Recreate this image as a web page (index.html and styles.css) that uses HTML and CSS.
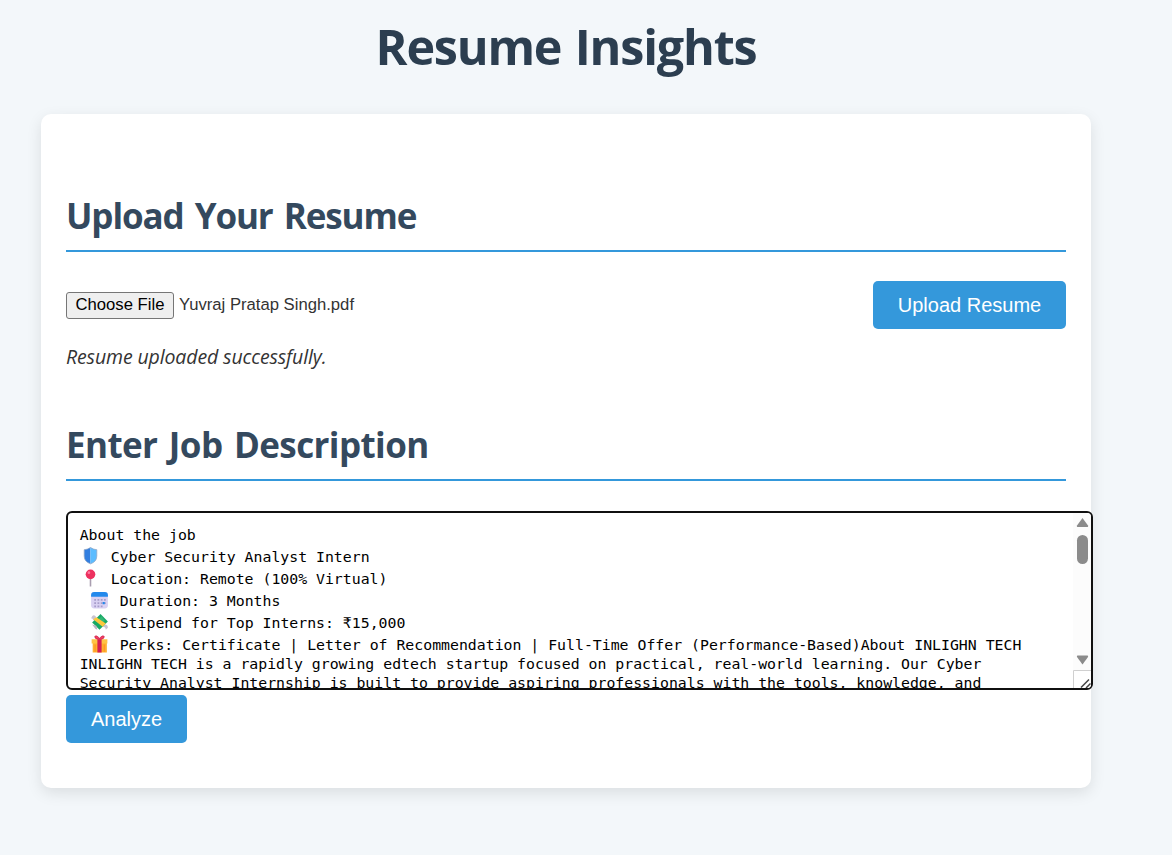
FILE: index.html
```html
<!DOCTYPE html>
<html lang="en">
<head>
<meta charset="utf-8">
<title>Resume Insights</title>
<link rel="stylesheet" href="styles.css">
</head>
<body>
<main class="page">
  <h1 class="title"><span>Resume Insights</span></h1>
  <div class="card">
    <section>
      <h2 class="heading heading-upload"><span>Upload Your Resume</span></h2>
      <div class="upload-row">
        <div class="file"><button class="choose" type="button">Choose File</button><span class="filename">Yuvraj Pratap Singh.pdf</span></div>
        <button class="btn btn-upload" type="button">Upload Resume</button>
      </div>
      <p class="message"><span>Resume uploaded successfully.</span></p>
    </section>
    <section>
      <h2 class="heading heading-job"><span>Enter Job Description</span></h2>
      <div class="editor">
        <div class="editor-text">
          <div class="line">About the job</div>
          <div class="line tall"><svg class="emoji" viewBox="0 0 20 20"><path d="M10 1.500Q7 3.500 4 3.500v6q0 5.500 6 7.500z" fill="#327fe0"/><path d="M10 1.500q3 2 6 2v6q0 5.500-6 7.500z" fill="#5bbcff"/><path d="M10 1.500Q7 3.500 4 3.500v6q0 5.500 6 7.500 6-2 6-7.500v-6Q13 3.500 10 1.500z" fill="none" stroke="#8fa5c4" stroke-width=".7"/></svg>Cyber Security Analyst Intern</div>
          <div class="line tall"><svg class="emoji" viewBox="0 0 20 20"><path d="M10 9v8.500" stroke="#a99eb0" stroke-width="1.500"/><circle cx="10" cy="6" r="4.600" fill="#ed315f"/><circle cx="8.500" cy="4.500" r="1.300" fill="#ff78a0"/></svg>Location: Remote (100% Virtual)</div>
          <div class="line tall indent"><svg class="emoji" viewBox="0 0 20 20"><rect x="2" y="2" width="16" height="15.500" rx="3" fill="#d9d1f2"/><path d="M2 6.500V5q0-3 3-3h10q3 0 3 3v1.500z" fill="#2389ec"/><path d="M5 9.500h11M5 12.500h11M5 15.500h8" stroke="#a79dca" stroke-width="1.700" stroke-dasharray="1.700 1.400"/><path d="M13 11.500h2v2h-2z" fill="#2389ec"/></svg>Duration: 3 Months</div>
          <div class="line tall indent"><svg class="emoji" viewBox="0 0 20 20"><path d="M3 4q2-2 4 1l-3 3q0-2-2-2zM13 14q3 0 3 3l2-2q0-3-3-3z" fill="#c9c2d0"/><path d="m3 10 8-8 7 7-8 8z" fill="#18a866"/><path d="m8 8 4-4 3 4-4 5z" fill="#32b875"/><path d="m4 7 3-2 9 6-3 3z" fill="#ffc83d"/><path d="m3 12 3 4 2 1-1-4z" fill="#bbb4c3"/></svg>Stipend for Top Interns: ₹15,000</div>
          <div class="line tall indent"><svg class="emoji" viewBox="0 0 20 20"><path d="M3.500 8H17v9.500H3.500z" fill="#ffb02e"/><path d="M2.500 5h15v4h-15z" fill="#ffc343"/><path d="M8 5h4v12.500H8z" fill="#d51d52"/><path d="M10 5Q5.500 5 5.500 2.500q1-2 4.500 1.500Q13.500.500 14.500 2.500 14.500 5 10 5z" fill="#f4425f" stroke="#c61c50" stroke-width=".700"/><path d="M5.800 10v7M14.500 10v7" stroke="#ff8f24"/></svg>Perks: Certificate | Letter of Recommendation | Full-Time Offer (Performance-Based)About INLIGHN TECH</div>
          <div class="line">INLIGHN TECH is a rapidly growing edtech startup focused on practical, real-world learning. Our Cyber</div>
          <div class="line">Security Analyst Internship is built to provide aspiring professionals with the tools, knowledge, and</div>
        </div>
        <div class="scrollbar">
          <svg width="18" height="153" viewBox="0 0 18 153"><path d="M9.500 5 15 12.500q.500 1.500-.500 1.500h-10q-1 0-.500-1.500z" fill="#8b8b8b"/><rect x="4" y="22" width="11" height="29" rx="5.500" fill="#8b8b8b"/><path d="M9.500 151.500 4 144q-.500-1.500.500-1.500h10q1 0 .500 1.500z" fill="#8b8b8b"/></svg>
          <svg class="grip" width="18" height="18" viewBox="0 0 18 18"><path d="M.500 19V.500H18" fill="none" stroke="#d0d0d0"/><path d="m8 17.500 8-8M13 18l4.500-4.500" fill="none" stroke="#444" stroke-width="1.500"/></svg>
        </div>
      </div>
      <button class="btn btn-analyze" type="button">Analyze</button>
    </section>
  </div>
</main>
</body>
</html>
```

FILE: styles.css
```css
* { box-sizing: border-box; }
body { margin: 0; min-height: 855px; background: #f3f7fa; color: #333; font-family: "Open Sans", "Noto Sans", sans-serif; }
.page { width: 1050px; min-height: 855px; margin-left: 41px; }
.title { margin: 0; height: 114px; padding-top: 12px; text-align: center; font-size: 48.500px; line-height: 68px; font-weight: 700; color: #2c3e50; letter-spacing: -1.200px; word-spacing: 2px; white-space: nowrap; }
.card { height: 674px; padding: 75px 25px 45px; background: #fff; border-radius: 10px; box-shadow: 0 5px 15px rgba(0, 0, 0, .1); }
.heading { margin: 0; height: 63px; border-bottom: 2px solid #3498db; color: #34495e; font-size: 35px; line-height: 53px; font-weight: 700; word-spacing: 3px; white-space: nowrap; }
.heading-upload { letter-spacing: -1.100px; }
.heading-job { letter-spacing: -0.600px; }
.upload-row { display: flex; justify-content: space-between; align-items: center; margin-top: 29px; }
.file { display: flex; align-items: center; font: 16.670px/20px "Liberation Sans", Arial, sans-serif; }
.choose { width: 108px; height: 27px; padding: 0; background: #efefef; border: 1px solid #767676; border-radius: 3px; color: #000; font: inherit; white-space: nowrap; }
.filename { margin-left: 5px; }
.btn { display: block; height: 48px; padding: 0; border: 0; border-radius: 5px; background: #3498db; color: #fff; font: 20px/48px "Liberation Sans", Arial, sans-serif; }
.btn-upload { width: 193px; }
.message { margin: 13px 0 46px; height: 30px; font-size: 19.500px; line-height: 30px; font-style: italic; letter-spacing: -0.120px; white-space: nowrap; }
.editor { display: flex; width: 1027px; height: 179px; margin-top: 30px; border: 2px solid #101010; border-radius: 6px; overflow: hidden; background: #fff; }
.editor-text { flex: 1; min-width: 0; padding: 12px 0 0 11.700px; overflow: hidden; color: #000; font: 14.840px/19px "DejaVu Sans Mono", monospace; }
.line { height: 19px; white-space: nowrap; }
.tall { display: flex; align-items: center; height: 22px; padding-top: 2px; }
.indent { padding-left: 9px; }
.emoji { flex: none; width: 21px; height: 21px; margin-right: 10px; }
.scrollbar { display: flex; flex-direction: column; justify-content: space-between; width: 18px; background: #fcfcfc; }
.grip { background: #fff; }
.btn-analyze { width: 121px; margin-top: 5px; }
```
